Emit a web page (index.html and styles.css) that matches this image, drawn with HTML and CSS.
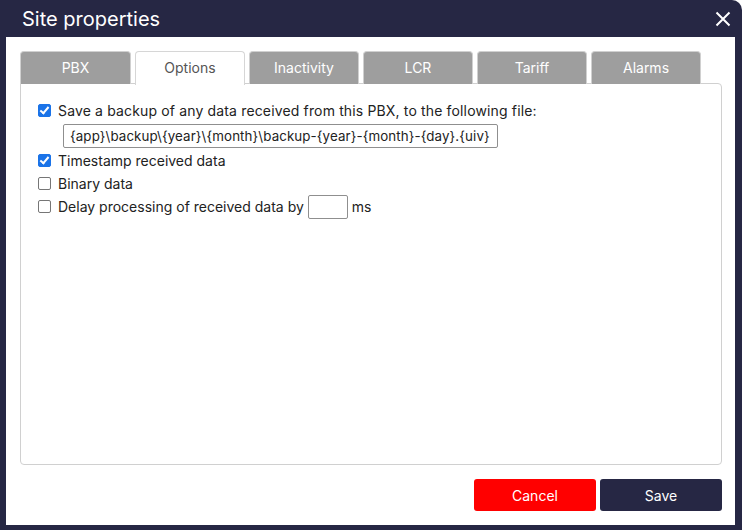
FILE: index.html
```html
<!DOCTYPE html>
<html>
<head>
<meta charset="utf-8">
<link rel="stylesheet" href="styles.css">
</head>
<body>
<div class="dialog">
  <div class="header">
    <span class="title">Site properties</span>
    <svg class="close" width="16" height="16" viewBox="0 0 16 16"><path d="M1.5 1.5L14.5 14.5M14.5 1.5L1.5 14.5" stroke="#fff" stroke-width="2" fill="none"/></svg>
  </div>
  <div class="body">
    <div class="tabs">
      <div class="tab">PBX</div>
      <div class="tab active">Options</div>
      <div class="tab">Inactivity</div>
      <div class="tab">LCR</div>
      <div class="tab">Tariff</div>
      <div class="tab">Alarms</div>
    </div>
    <div class="panel">
      <label class="row wide-text"><span class="cb checked"></span>Save a backup of any data received from this PBX, to the following file:</label>
      <div class="filerow"><div class="input wide">{app}\backup\{year}\{month}\backup-{year}-{month}-{day}.{uiv}</div></div>
      <label class="row"><span class="cb checked"></span>Timestamp received data</label>
      <label class="row"><span class="cb"></span>Binary data</label>
      <label class="row"><span class="cb"></span>Delay processing of received data by <span class="input small"></span> ms</label>
    </div>
    <div class="footer">
      <button class="btn cancel">Cancel</button>
      <button class="btn save">Save</button>
    </div>
  </div>
</div>
</body>
</html>
```
FILE: styles.css
```css
html, body { margin: 0; padding: 0; }
body { width: 742px; height: 530px; background: #fff; font-family: Inter, "Noto Sans", sans-serif; overflow: hidden; }
.dialog { width: 742px; height: 530px; box-sizing: border-box; background: #262744; border-radius: 0 10px 0 0; padding: 0 7px 5px 6px; display: flex; flex-direction: column; }
.header { height: 37px; display: flex; align-items: center; justify-content: space-between; padding: 0 4px 0 16px; }
.title { color: #fff; font-size: 20px; font-weight: 400; }
.close { margin-top: 1px; }
.body { flex: 1; background: #fff; padding: 14px 13px 0 14px; display: flex; flex-direction: column; }
.tabs { display: flex; gap: 4px; height: 33px; position: relative; z-index: 1; }
.tab { width: 110px; height: 33px; box-sizing: border-box; background: #9e9e9e; border: 1px solid #d0d0d0; border-bottom: none; border-radius: 4px 4px 0 0; color: #fff; font-size: 14px; display: flex; align-items: center; justify-content: center; padding-bottom: 1px; }
.tab:first-child { width: 111px; }
.tab.active { background: #fff; color: #555; height: 34px; border-color: #d6d6d6; padding-bottom: 2px; }
.panel { height: 382px; box-sizing: border-box; border: 1px solid #d0d0d0; border-radius: 0 4px 4px 4px; margin-top: -1px; padding: 15px 0 0 17px; font-size: 14px; color: #222; }
.row { display: flex; align-items: center; height: 23px; }
.wide-text { letter-spacing: 0.15px; }
.cb { width: 13px; height: 13px; box-sizing: border-box; border: 1.5px solid #767676; border-radius: 2px; margin-right: 7px; background: #fff; flex: none; position: relative; }
.cb.checked { background: #1a73e8; border-color: #1a73e8; }
.cb.checked::after { content: ""; position: absolute; left: 3px; top: 0px; width: 3px; height: 7px; border: solid #fff; border-width: 0 2px 2px 0; transform: rotate(40deg); }
.filerow { padding: 2px 0 1px 25px; }
.input { box-sizing: border-box; border: 1px solid #8f8f8f; border-radius: 2px; background: #fff; }
.wide { width: 435px; height: 24px; font-size: 13.33px; letter-spacing: 0.1px; line-height: 22px; padding-left: 6px; color: #222; white-space: nowrap; }
.small { display: inline-block; width: 40px; height: 24px; margin: 0 4px; }
.footer { display: flex; justify-content: flex-end; gap: 4px; padding-top: 14px; }
.btn { width: 122px; height: 32px; border: none; border-radius: 3px; color: #fff; font-family: Inter, "Noto Sans", sans-serif; font-size: 14px; cursor: pointer; }
.cancel { background: #ff0000; }
.save { background: #262744; }
```
